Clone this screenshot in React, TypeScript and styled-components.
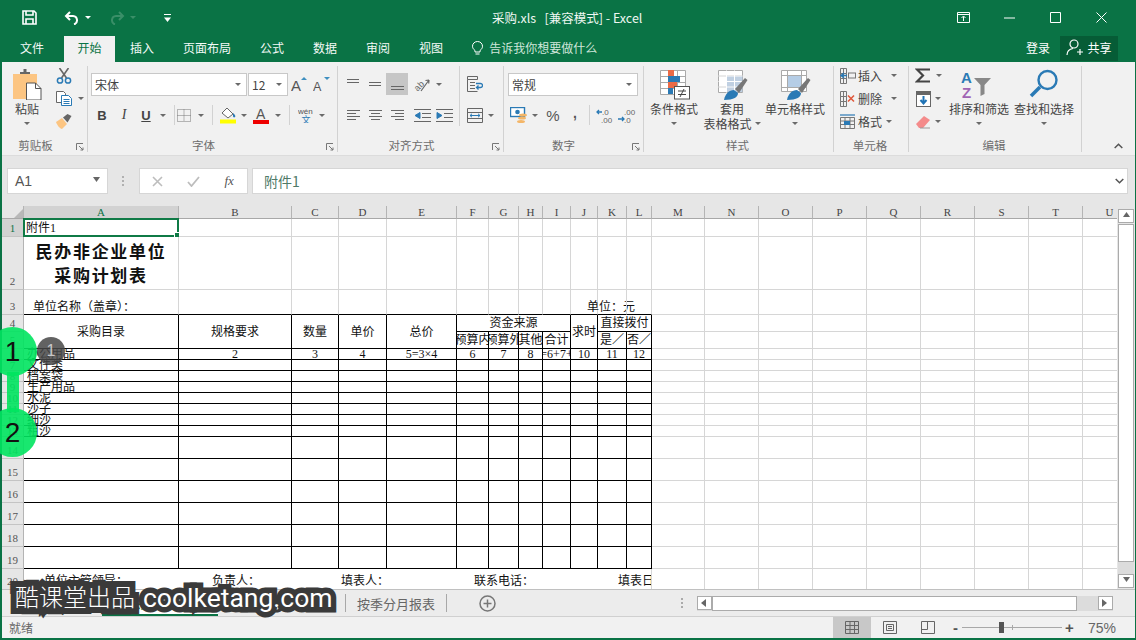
import React from "react";
import styled, { createGlobalStyle } from "styled-components";

const GREEN = "#0a7345";
const UI = `"Noto Sans CJK SC", "Noto Sans", sans-serif`;
const GRID = "#d6d6d6";

const Global = createGlobalStyle`
  html, body { margin: 0; padding: 0; background: ${GREEN}; }
  * { box-sizing: border-box; }
`;

const Window = styled.div`
  position: relative; width: 1136px; height: 640px; overflow: hidden;
  background: ${GREEN}; padding: 0 1px 2px 2px;
  display: flex; flex-direction: column;
  font-family: ${UI}; font-size: 12px; color: #444;
`;

/* ---------- title bar ---------- */
const TitleBar = styled.header`
  height: 35px; display: flex; align-items: center; color: #fff; flex: none;
`;
const Qat = styled.div`
  width: 490px; display: flex; align-items: center; padding-left: 20px;
`;
const Title = styled.div`
  flex: 1; font-size: 12.5px; white-space: pre; padding-bottom: 1px; color: #eef7f2;
`;
const WinControls = styled.div`
  display: flex; align-items: center; padding-right: 11px;
`;
const WinBtn = styled.div<{ $w: number }>`
  width: ${(p) => p.$w}px; display: flex; justify-content: center; align-items: center;
`;
const Slot = styled.div<{ $w: number; $l?: number; $on?: boolean }>`
  width: ${(p) => p.$w}px; flex: none; height: 22px; margin-left: ${(p) => p.$l ?? 0}px;
  display: flex; align-items: center; justify-content: center;
  background: ${(p) => (p.$on ? "#c6c6c6" : "transparent")};
`;
const Caret = styled.i<{ $c?: string }>`
  display: block; width: 0; height: 0; flex: none; font-style: normal;
  border-left: 3px solid transparent; border-right: 3px solid transparent;
  border-top: 3px solid ${(p) => p.$c ?? "#6a6a6a"};
`;

/* ---------- tab row ---------- */
const TabRow = styled.nav`
  height: 27px; display: flex; align-items: stretch; padding-left: 4px; flex: none; color: #fff;
`;
const Tab = styled.div<{ $on?: boolean; $mr?: number }>`
  display: flex; align-items: center; padding: 0 ${(p) => (p.$on ? "13.5px" : "14px")} 3px;
  margin-right: ${(p) => p.$mr ?? 1}px; margin-top: 1px; font-size: 12px;
  background: ${(p) => (p.$on ? "#f1f1f1" : "transparent")};
  color: ${(p) => (p.$on ? "#0a7345" : "#f4faf7")};
`;
const Tell = styled.div`
  display: flex; align-items: center; gap: 6px; margin-left: 14px; padding-bottom: 3px; margin-top: 1px; color: #cfe6da; flex: 1;
`;
const Login = styled.div`
  display: flex; align-items: center; margin-right: 10px; margin-top: 1px; padding-bottom: 3px;
`;
const Share = styled.div`
  width: 58px; height: 25px; margin: 1px 17px 0 0; background: #065c36; padding-bottom: 2px;
  display: flex; align-items: center; justify-content: center; gap: 3px;
`;

/* ---------- ribbon ---------- */
const Ribbon = styled.section`
  height: 94px; background: #f1f1f1; display: flex; flex: none; padding-top: 4px;
  border-bottom: 1px solid #dcdcdc;
`;
const Group = styled.div<{ $w: number }>`
  position: relative; width: ${(p) => p.$w}px; height: 86px; flex: none;
  border-right: 1px solid #d2d2d2; display: flex; flex-direction: column;
`;
const GroupBody = styled.div`
  height: 72px; display: flex;
`;
const GroupLabel = styled.div<{ $pr?: number }>`
  height: 14px; line-height: 14px; text-align: center; font-size: 11.5px; color: #6d6d6d;
  padding-right: ${(p) => p.$pr ?? 0}px;
`;
const Launcher = styled.svg`
  position: absolute; right: 3px; bottom: 1px;
`;
const Stack = styled.div<{ $pl?: number; $pt?: number; $w?: number; $mt?: number }>`
  display: flex; flex-direction: column; padding-left: ${(p) => p.$pl ?? 0}px;
  padding-top: ${(p) => p.$pt ?? 7}px; margin-top: ${(p) => p.$mt ?? 0}px;
  width: ${(p) => (p.$w ? `${p.$w}px` : "auto")}; flex: none;
`;
const Line = styled.div<{ $mt?: number }>`
  display: flex; align-items: center; height: 22px; margin-top: ${(p) => p.$mt ?? 0}px;
`;
const Combo = styled.div<{ $w: number; $mr?: number }>`
  width: ${(p) => p.$w}px; height: 23px; background: #fff; border: 1px solid #c8c8c8;
  margin-right: ${(p) => p.$mr ?? 0}px; flex: none;
  display: flex; align-items: center; justify-content: space-between;
  padding: 0 5px 0 3px; font-size: 12px; color: #444;
`;
const VSep = styled.div<{ $l?: number; $h?: number }>`
  width: 1px; height: ${(p) => p.$h ?? 20}px; background: #d2d2d2; flex: none;
  margin-left: ${(p) => p.$l ?? 0}px;
`;
const Large = styled.div<{ $w: number }>`
  width: ${(p) => p.$w}px; flex: none; display: flex; flex-direction: column; align-items: center;
  padding-top: 3px; font-size: 12px; line-height: 15px; color: #444; white-space: nowrap;
`;
const LargeIcon = styled.div`
  height: 32px; display: flex; align-items: flex-start; justify-content: center;
`;
const LargeCaret = styled.div`
  height: 15px; display: flex; align-items: center;
`;
const Inline = styled.span`
  display: inline-flex; align-items: center; gap: 3px;
`;
const CellRow = styled.div`
  display: flex; align-items: center; height: 23px; padding-left: 5px; white-space: nowrap; color: #444;
`;
const CellText = styled.span<{ $w: number }>`
  width: ${(p) => p.$w}px; margin-left: 2px; flex: none;
`;
const Bold = styled.b`
  font: bold 13px "Liberation Sans", sans-serif; color: #444;
`;
const Ital = styled.i`
  font: italic 14px "Liberation Serif", serif; color: #444;
`;
const Under = styled.u`
  font: bold 13px "Liberation Sans", sans-serif; color: #444;
`;
const Comma = styled.span`
  font: bold 14px "Liberation Sans", sans-serif; color: #555; margin-top: -4px;
`;
const Percent = styled.span`
  font: 15px "Liberation Sans", sans-serif; color: #555;
`;
const Collapse = styled.div`
  margin-left: 32px; align-self: flex-start; margin-top: 69px;
`;

/* ---------- formula bar ---------- */
const FormulaBar = styled.div`
  height: 50px; background: #e6e6e6; display: flex; padding: 12px 7px 0 5px; gap: 0; flex: none;
`;
const NameBox = styled.div`
  width: 101px; height: 26px; background: #fff; border: 1px solid #d6d6d6;
  display: flex; align-items: center; justify-content: space-between;
  padding: 0 7px; font: 14px "Liberation Sans", sans-serif; color: #555;
`;
const Grip = styled.div`
  width: 31px; display: flex; align-items: center; justify-content: center; height: 26px;
`;
const FxBox = styled.div`
  width: 109px; height: 26px; background: #fff; border: 1px solid #d6d6d6; margin-right: 4px;
  display: flex; align-items: center;
`;
const FxSlot = styled.div`
  width: 36px; display: flex; justify-content: center; align-items: center;
`;
const Fx = styled.span`
  font: italic 13px "Liberation Serif", serif; color: #555;
`;
const Input = styled.div`
  flex: 1; height: 26px; background: #fff; border: 1px solid #d6d6d6; padding: 0 3px 0 11px;
  display: flex; align-items: center; justify-content: space-between;
  font-size: 14px; color: #4f7a68;
`;

/* ---------- sheet ---------- */
const SheetArea = styled.div`
  height: 384px; display: flex; background: #fff; flex: none;
  border-bottom: 1px solid #c0c0c0;
`;
const SheetClip = styled.div`
  flex: 1; overflow: hidden;
`;
const Table = styled.table`
  table-layout: fixed; border-collapse: separate; border-spacing: 0; width: 1135px;
  font-family: "Liberation Serif", "Noto Sans CJK SC", serif; font-size: 12px; color: #111;
`;
const Corner = styled.th`
  height: 13px; padding: 0; background: #e6e6e6; border-right: 1px solid #b4b4b4; border-bottom: 1px solid #a8a8a8;
  text-align: right; vertical-align: bottom; line-height: 0;
`;
const ColHead = styled.th<{ $on?: boolean }>`
  height: 13px; padding: 0; font: 400 11px/12px "Liberation Serif", serif;
  background: ${(p) => (p.$on ? "#d2d2d2" : "#e6e6e6")};
  color: ${(p) => (p.$on ? "#0a7345" : "#444")};
  border-right: 1px solid #b4b4b4; border-bottom: 1px solid ${(p) => (p.$on ? "#0a7345" : "#a8a8a8")};
`;
const RowHead = styled.th<{ $on?: boolean; $h: number }>`
  height: ${(p) => p.$h}px; padding: 0; font: 400 11px/10px "Liberation Serif", serif;
  vertical-align: ${(p) => (p.$h > 20 ? "bottom" : "middle")};
  padding-bottom: ${(p) => (p.$h > 20 ? 3 : 0)}px;
  background: ${(p) => (p.$on ? "#d2d2d2" : "#e6e6e6")};
  color: ${(p) => (p.$on ? "#0a7345" : "#555")};
  border-right: 1px solid #b4b4b4; border-bottom: 1px solid #c4c4c4;
`;
const Td = styled.td<{
  $ink?: boolean; $under?: boolean; $h?: number; $bottom?: boolean; $pl?: number; $bare?: boolean; $c?: boolean;
}>`
  position: relative; padding: 0 0 0 ${(p) => p.$pl ?? 0}px;
  height: ${(p) => (p.$h ? `${p.$h}px` : "auto")};
  border-right: 1px solid ${(p) => (p.$ink ? "#000" : p.$bare ? "transparent" : GRID)};
  border-bottom: 1px solid ${(p) => (p.$ink || p.$under ? "#000" : GRID)};
  line-height: 10px; white-space: nowrap;
  vertical-align: ${(p) => (p.$bottom ? "bottom" : "middle")};
  text-align: ${(p) => (p.$c ? "center" : "left")};
`;
const Clip = styled.div<{ $tight?: boolean }>`
  display: flex; justify-content: center; overflow: hidden; white-space: nowrap;
  line-height: ${(p) => (p.$tight ? "10px" : "16px")};
  height: ${(p) => (p.$tight ? "10px" : "auto")};
`;
const Ink = styled.div<{ $mb?: number }>`
  line-height: 14px; margin-bottom: ${(p) => p.$mb ?? 0}px;
`;
const ClipLeft = styled.div`
  overflow: hidden; line-height: 14px; white-space: nowrap; margin-bottom: 1px;
`;
const HeadText = styled.div`
  text-align: center; line-height: 16px; font-size: 12px;
`;
const Heading = styled.div`
  font: bold 17px/24px "Noto Sans CJK SC", sans-serif; text-align: center; letter-spacing: 1.7px;
`;
const SelBox = styled.div`
  position: absolute; left: -1px; top: -1px; right: -1px; bottom: -1px; border: 2px solid #0f7a46;
`;
const SelHandle = styled.div`
  position: absolute; right: -3px; bottom: -3px; width: 6px; height: 6px; background: #0f7a46; border: 1px solid #fff;
`;
const A1Text = styled.div`
  line-height: 14px; padding-left: 2px; font-size: 12px;
`;

/* ---------- scroll bars ---------- */
const VScroll = styled.div`
  width: 18px; flex: none; background: #e6e6e6; display: flex; flex-direction: column; padding: 3px 1px 1px 1px;
`;
const ScrollBtn = styled.div<{ $wide?: boolean }>`
  width: ${(p) => (p.$wide ? "15px" : "16px")}; height: 14px; background: #fff; border: 1px solid #ababab;
  display: flex; align-items: center; justify-content: center; flex: none;
`;
const VThumb = styled.div`
  height: 338px; width: 16px; background: #fff; border: 1px solid #ababab; flex: none; margin-top: 1px;
`;
const VRest = styled.div`
  flex: 1; background: #dcdcdc; width: 16px;
`;

/* ---------- tab bar ---------- */
const SheetBar = styled.div`
  height: 27px; background: #ececec; display: flex; align-items: center; flex: none;
  border-bottom: 1px solid #d0d0d0;
`;
const SheetNavSpace = styled.div`
  width: 100px; flex: none;
`;
const SheetTab = styled.div<{ $w: number; $on?: boolean }>`
  position: relative; width: ${(p) => p.$w}px; height: 100%; flex: none; font-size: 13px; color: #666;
  display: flex; align-items: center; justify-content: center; white-space: nowrap;
  ${(p) => p.$on && "border-bottom: 2px solid #0a7345; background: #fff; color: #0a7345; font-weight: 700;"}
`;
const TabSep = styled.div`
  width: 1px; height: 18px; background: #a8a8a8; flex: none;
`;
const PlusSlot = styled.div`
  width: 81px; flex: none; display: flex; justify-content: center; align-items: center;
`;
const Dots = styled.div`
  width: 169px; flex: none; display: flex; justify-content: flex-end; padding-right: 13px;
`;
const HScroll = styled.div`
  width: 416px; height: 15px; flex: none; display: flex; background: #dcdcdc;
`;
const HThumb = styled.div`
  width: 365px; height: 15px; background: #fff; border: 1px solid #ababab; flex: none;
`;
const HRest = styled.div`
  flex: 1;
`;

/* ---------- status bar ---------- */
const Status = styled.footer`
  flex: 1; background: #f1f1f1; display: flex; align-items: stretch; font-size: 12px; color: #666;
`;
const Ready = styled.div`
  flex: none; width: 831px; padding-left: 7px; display: flex; align-items: center;
`;
const ViewBtn = styled.div<{ $on?: boolean }>`
  width: 38px; flex: none; display: flex; align-items: center; justify-content: center;
  background: ${(p) => (p.$on ? "#c8c8c8" : "transparent")};
`;
const Zoomer = styled.div`
  display: flex; align-items: center; margin-left: 4px; flex: none;
`;
const Track = styled.div`
  position: relative; width: 100px; height: 1px; background: #a8a8a8; margin: 0 3px 0 2px;
`;
const Knob = styled.div`
  position: absolute; left: 37px; top: -5px; width: 5px; height: 11px; background: #555;
`;
const Tick = styled.div`
  position: absolute; left: 50px; top: -2px; width: 1px; height: 5px; background: #a8a8a8;
`;
const Sign = styled.span`
  font: bold 15px "Liberation Sans", sans-serif; color: #555; width: 9px; text-align: center;
`;
const Percentage = styled.div`
  margin-left: 14px; display: flex; align-items: center; font: 14px "Liberation Sans", sans-serif; color: #666;
`;

/* ---------- overlays ---------- */
const Marker = styled.div<{ $x: number; $y: number }>`
  position: absolute; left: ${(p) => p.$x}px; top: ${(p) => p.$y}px; width: 49px; height: 49px; border-radius: 50%;
  background: rgba(0, 228, 95, 0.9); color: #111;
  font: 28px/49px "Liberation Sans", sans-serif; text-align: center;
`;
const MarkerLink = styled.div`
  position: absolute; left: 7px; top: 372px; width: 12px; height: 40px; background: rgba(0, 228, 95, 0.9);
`;
const Badge = styled.div`
  position: absolute; left: 37px; top: 337px; width: 28px; height: 28px; border-radius: 50%;
  background: rgba(70, 70, 70, 0.85); color: #c8c8c8; font: 16px/28px "Liberation Sans", sans-serif; text-align: center;
`;
const Watermark = styled.div`
  position: absolute; left: 15px; top: 581px; display: flex; align-items: center; white-space: nowrap; color: #fff;
`;
const WmCn = styled.span`
  font: 300 24px/32px "Noto Sans CJK SC", sans-serif; -webkit-text-stroke: 12px #3a3a3a; paint-order: stroke fill;
  margin-top: -3px;
`;
const WmEn = styled.span`
  font: 400 26.5px/32px "Roboto", "Liberation Sans", sans-serif; margin-left: 8px; margin-top: 1px;
  -webkit-text-stroke: 11px #3a3a3a; paint-order: stroke fill;
`;

/* ---------- icons ---------- */
const Save = () => (
  <svg width="15" height="15" viewBox="0 0 15 15" fill="none" stroke="#fff" strokeWidth="1.6">
    <path d="M1 1h11l2 2v11H1z" /><path d="M4 1v4h7V1M4 14V9h7v5" />
  </svg>
);
const Undo = ({ c, flip }: { c: string; flip?: boolean }) => (
  <svg width="16" height="14" viewBox="0 0 16 14" fill="none" stroke={c} strokeWidth="2" transform={flip ? "scale(-1 1)" : undefined}>
    <path d="M6 1L2 5l4 4" /><path d="M2 5h7a4.3 4.3 0 0 1 1 8.4" />
  </svg>
);
const Custom = () => (
  <svg width="7" height="8" viewBox="0 0 7 8" fill="#fff"><rect width="7" height="1" /><path d="M0 3.500h7L3.500 8z" /></svg>
);
const Launch = () => (
  <Launcher width="8" height="8" viewBox="0 0 8 8" fill="none" stroke="#777">
    <path d="M.5 7V.5H7" /><path d="M3 3l4 4M7 4.500V7H4.500" />
  </Launcher>
);
const PasteIco = () => (
  <svg width="29" height="31" viewBox="0 0 29 31">
    <rect x="0" y="5" width="24" height="25" fill="#fcc582" />
    <path d="M7 5V3h3.500V0h3v3H17v2z" fill="#666" />
    <path d="M13.500 14h9l5.500 5.500V31H13.500z" fill="#fff" stroke="#555" />
    <path d="M22.500 14v5.500H28" fill="none" stroke="#555" />
  </svg>
);
const Scissors = () => (
  <svg width="16" height="16" viewBox="0 0 16 16" fill="none">
    <path d="M3.500 0l7 10M12.500 0l-7 10" stroke="#666" strokeWidth="1.6" />
    <circle cx="4" cy="12.500" r="2.600" stroke="#2a7ab5" strokeWidth="1.5" />
    <circle cx="12" cy="12.500" r="2.600" stroke="#2a7ab5" strokeWidth="1.5" />
  </svg>
);
const CopyIco = () => (
  <svg width="16" height="15" viewBox="0 0 16 15" fill="#fff">
    <path d="M.5.5h7l2 2v9h-9z" stroke="#666" />
    <path d="M5.500 4.500h7l3 3v7h-10z" stroke="#2a7ab5" />
    <path d="M7.500 8.500h6M7.500 10.500h6M7.500 12.500h6" stroke="#2a7ab5" />
  </svg>
);
const Brush = () => (
  <svg width="16" height="15" viewBox="0 0 16 15">
    <path d="M0 8l6-4 5 6-5 5C4 15 1 11 0 8z" fill="#fcc582" />
    <path d="M7 3.500L11.500 0l4 2-4 6.500z" fill="#666" />
  </svg>
);
const Grow = ({ size, up }: { size: number; up: boolean }) => (
  <svg width="18" height="16" viewBox="0 0 18 16">
    <text x="0" y="15" fontFamily="Liberation Sans" fontSize={size} fill="#555">A</text>
    <path d={up ? "M10 4l3-3 3 3z" : "M11 1h6l-3 3z"} fill="#3f8fc0" />
  </svg>
);
const BorderIco = () => (
  <svg width="14" height="13" viewBox="0 0 14 13" stroke="#777" strokeDasharray="1 1" fill="none">
    <path d="M.5.5h13v12H.5zM7 .5v12M.5 6.500h13" />
  </svg>
);
const FillIco = () => (
  <svg width="17" height="17" viewBox="0 0 17 17">
    <path d="M2 6l5-5 6 6-5 4z" fill="#fff" stroke="#666" />
    <path d="M13 6c2 2 3 3 2 4s-2 0-2-1z" fill="#2a7ab5" />
    <rect y="12.500" width="16" height="4" fill="#ffff00" />
  </svg>
);
const ColorA = () => (
  <svg width="17" height="17" viewBox="0 0 17 17">
    <text x="3" y="12" fontFamily="Liberation Sans" fontSize="14" fill="#555">A</text>
    <rect y="13" width="16" height="4" fill="#ee0000" />
  </svg>
);
const Wen = () => (
  <svg width="16" height="16" viewBox="0 0 16 16">
    <text x="0" y="6.500" fontFamily="Liberation Sans" fontSize="8" fill="#555">wén</text>
    <text x="3.500" y="15.500" fontFamily="Noto Sans CJK SC" fontSize="9" fill="#2a7ab5">文</text>
  </svg>
);
const Lines = ({ d, c = "#666" }: { d: string; c?: string }) => (
  <svg width="15" height="15" viewBox="0 0 15 15" fill="none" stroke={c}><path d={d} /></svg>
);
const Orient = () => (
  <svg width="17" height="16" viewBox="0 0 17 16" fill="none">
    <text x="0" y="13" fontFamily="Liberation Sans" fontSize="9" fill="#666" stroke="none" transform="rotate(-45 5 10)">ab</text>
    <path d="M7 15L15 4M15 4l-3.500 .5M15 4l-.3 3.500" stroke="#666" strokeWidth="1.2" />
  </svg>
);
const Indent = ({ flip }: { flip?: boolean }) => (
  <svg width="17" height="13" viewBox="0 0 17 13" fill="none" stroke="#666">
    <path d="M0 .5h17M8 4.500h9M8 8.500h9M0 12.500h17" />
    <path d={flip ? "M6 3.500v6L1 6.500z" : "M1 3.500v6L6 6.500z"} fill="#2a7ab5" stroke="#2a7ab5" />
  </svg>
);
const Wrap = () => (
  <svg width="16" height="16" viewBox="0 0 16 16" fill="none">
    <path d="M.5.5h10v3h-10zM.5 3.500v12h10M3 6.500h5M3 9.500h5M3 12.500h5" stroke="#666" />
    <path d="M9 7.500h4.500a1.800 1.800 0 0 1 0 4H10M11.500 9.500l-2 2 2 2" stroke="#2a7ab5" strokeWidth="1.3" />
  </svg>
);
const Merge = () => (
  <svg width="16" height="15" viewBox="0 0 16 15" fill="none">
    <path d="M.5.5h15v14H.5zM.5 4.500h15M.5 10.500h15" stroke="#666" />
    <path d="M3 7.500h10M5 5.800L3 7.500l2 1.700M11 5.800l2 1.700-2 1.700" stroke="#2a7ab5" />
  </svg>
);
const Currency = () => (
  <svg width="18" height="17" viewBox="0 0 18 17">
    <rect x=".5" y=".5" width="14" height="9" fill="#fff" stroke="#2a7ab5" strokeWidth="1.4" />
    <circle cx="7.500" cy="5" r="2.300" fill="#2a7ab5" />
    <ellipse cx="13" cy="8" rx="4" ry="1.600" fill="#f4b668" />
    <ellipse cx="12" cy="11" rx="4" ry="1.600" fill="#f4b668" />
    <ellipse cx="11" cy="14.500" rx="4" ry="1.600" fill="#f4b668" />
  </svg>
);
const Decimal = ({ a, b, left }: { a: string; b: string; left: boolean }) => (
  <svg width="18" height="15" viewBox="0 0 18 15">
    <text x="6" y="7" fontFamily="Liberation Sans" fontSize="8" fill="#666">{a}</text>
    <text x={left ? 5 : 6} y="14.500" fontFamily="Liberation Sans" fontSize="8" fill="#666">{b}</text>
    <path d={left ? "M6 4H1M3 2L1 4l2 2" : "M0 11h6M4 9l2 2-2 2"} stroke="#2a7ab5" strokeWidth="1.3" fill="none" />
  </svg>
);
const Cond = () => (
  <svg width="31" height="31" viewBox="0 0 31 31">
    <path d="M1.500 1.500h25v24h-25zM1.500 7.500h25M1.500 13.500h25M1.500 19.500h25M9.500 1.500v24M18.500 1.500v24" fill="#fff" stroke="#aaa" />
    <rect x="9" y="1" width="6" height="6" fill="#ea6b47" /><rect x="9" y="7" width="12" height="6" fill="#2a7ab5" />
    <rect x="9" y="13" width="9" height="6" fill="#ea6b47" /><rect x="9" y="19" width="5" height="6" fill="#2a7ab5" />
    <rect x="15.500" y="17.500" width="15" height="12.500" fill="#fff" stroke="#555" />
    <path d="M19 22h8M19 25.500h8M25 20l-4 8" stroke="#444" fill="none" />
  </svg>
);
const TableFmt = () => (
  <svg width="31" height="31" viewBox="0 0 31 31">
    <path d="M1.500 1.500h24v22h-24zM1.500 7h24M1.500 12.500h24M1.500 18h24M9.500 1.500v22M17.500 1.500v22" fill="#fff" stroke="#aaa" />
    <rect x="9.500" y="7" width="16" height="16" fill="#b5c8dd" opacity=".85" />
    <path d="M1.500 7h24M1.500 12.500h24M1.500 18h24M9.500 1.500v22M17.500 1.500v22" stroke="#fff" fill="none" />
    <path d="M18 20L28 9l2.500 2L22 24z" fill="#777" />
    <path d="M7 31c1-6 5-10 10-10l4 3c0 4-4 7-14 7z" fill="#2a7ab5" />
  </svg>
);
const CellFmt = () => (
  <svg width="31" height="31" viewBox="0 0 31 31">
    <path d="M1.500 1.500h25v21h-25zM1.500 6.500h25M7.500 1.500v21M21.500 1.500v21M1.500 18.500h25" fill="#fff" stroke="#aaa" />
    <rect x="8" y="7" width="13" height="11" fill="#b5cde6" />
    <path d="M18 20L28 9l2.500 2L22 24z" fill="#777" />
    <path d="M7 31c1-6 5-10 10-10l4 3c0 4-4 7-14 7z" fill="#2a7ab5" />
  </svg>
);
const CellOp = ({ kind }: { kind: "ins" | "del" | "fmt" }) => (
  <svg width="17" height="16" viewBox="0 0 17 16" fill="none">
    {kind === "fmt" ? (
      <>
        <path d="M1.500 3.500h14v11h-14zM1.500 7h14M1.500 10.500h14M6 3.500v11M11 3.500v11" stroke="#777" />
        <rect x="5" y="7" width="6" height="4" fill="#2a7ab5" />
        <path d="M1 1h15" stroke="#2a7ab5" strokeWidth="1.2" />
      </>
    ) : (
      <>
        <path d="M1.500 .5h6v5h-6zM1.500 5.500h6v5h-6zM1.500 10.500h6v5h-6zM4.500 .5v15" stroke="#777" />
        {kind === "ins" ? (
          <>
            <rect x="9.500" y="5" width="7" height="5" stroke="#777" />
            <path d="M8 7.500H2M5 5L2 7.500 5 10" stroke="#2a7ab5" strokeWidth="1.4" />
          </>
        ) : (
          <path d="M9 4.500l6 6M15 4.500l-6 6" stroke="#e0593c" strokeWidth="1.6" />
        )}
      </>
    )}
  </svg>
);
const Sigma = () => (
  <svg width="16" height="15" viewBox="0 0 16 15" fill="none" stroke="#444" strokeWidth="2.200">
    <path d="M15 1.500H2l6 6-6 6h13" />
  </svg>
);
const FillDown = () => (
  <svg width="15" height="16" viewBox="0 0 15 16">
    <rect x=".5" y=".5" width="14" height="15" fill="#fff" stroke="#666" />
    <rect x="0" y="0" width="15" height="4" fill="#666" />
    <path d="M7.500 5v7M4.500 9l3 3.500 3-3.500" stroke="#1f73b5" strokeWidth="2" fill="none" />
  </svg>
);
const Eraser = () => (
  <svg width="15" height="14" viewBox="0 0 15 14">
    <path d="M0 9l8-8 6 4-7 8H3z" fill="#f48b8b" />
    <path d="M4 13h10" stroke="#999" />
  </svg>
);
const SortIco = () => (
  <svg width="36" height="31" viewBox="0 0 36 31">
    <text x="0" y="14" fontFamily="Liberation Sans" fontWeight="700" fontSize="15" fill="#2a7ab5">A</text>
    <text x="1" y="29" fontFamily="Liberation Sans" fontWeight="700" fontSize="15" fill="#a064b4">Z</text>
    <path d="M13 9h17l-6.500 7v9l-4 2V16z" fill="#888" />
  </svg>
);
const FindIco = () => (
  <svg width="30" height="29" viewBox="0 0 30 29" fill="none" stroke="#2a7ab5">
    <circle cx="18.500" cy="11" r="9" strokeWidth="2.400" />
    <path d="M11 18L2 27" strokeWidth="3.600" />
  </svg>
);
const Chevron = ({ down }: { down?: boolean }) => (
  <svg width="9" height="6" viewBox="0 0 9 6" fill="none" stroke="#555" strokeWidth="1.5">
    <path d={down ? "M.7 1l3.800 3.800L8.300 1" : "M.7 5l3.800-3.800L8.300 5"} />
  </svg>
);
const Vgrip = ({ c = "#aaa" }: { c?: string }) => (
  <svg width="3" height="11" viewBox="0 0 3 11" fill={c}>
    <rect width="2" height="2" /><rect y="4" width="2" height="2" /><rect y="8" width="2" height="2" />
  </svg>
);
const Tri = ({ dir }: { dir: "u" | "d" | "l" | "r" }) => {
  const d = { u: "M0 5l3.500-5L7 5z", d: "M0 0h7L3.500 5z", l: "M5 0v8L0 4z", r: "M0 0v8l5-4z" }[dir];
  return <svg width="7" height="8" viewBox="0 0 7 8" fill="#666"><path d={d} /></svg>;
};

const ALIGN = {
  top: "M1 2.500h12M1 5.500h12",
  mid: "M1 5.500h12M1 8.500h12",
  bot: "M1 9.500h13M1 12.500h13",
  left: "M1 2.500h13M1 5.500h9M1 8.500h13M1 11.500h9",
  center: "M1 2.500h13M3 5.500h9M1 8.500h13M3 11.500h9",
  right: "M1 2.500h13M5 5.500h9M1 8.500h13M5 11.500h9",
};

/* ---------- sheet data ---------- */
const COLS = [155, 113, 47, 48, 70, 32, 30, 24, 28, 27, 29, 25, 53, 54, 54, 54, 54, 54, 54, 54, 54];
const LETTERS = "ABCDEFGHIJKLMNOPQRSTU".split("");
const FAR = LETTERS.slice(12);
const Far = () => <>{FAR.map((l) => <Td key={l} />)}</>;
const Blanks = ({ from, to, ink, under }: { from: number; to: number; ink?: boolean; under?: boolean }) => (
  <>
    {LETTERS.slice(from, to).map((l) => <Td key={l} $ink={ink} $under={under} />)}
  </>
);

const ITEMS: [number, string][] = [
  [7, "文件类"], [8, "档案袋"], [9, "生产用品"], [10, "水泥"], [11, "沙子"], [12, "细沙"], [13, "粗沙"],
];
const SERIAL = ["2", "3", "4", "5=3×4", "6", "7", "8", "=6+7+", "10", "11", "12"];

const Rh = ({ n, h, on }: { n: number; h: number; on?: boolean }) => <RowHead $h={h} $on={on}>{n}</RowHead>;

const Sheet = () => (
  <Table>
    <colgroup>
      <col width={22} />
      {COLS.map((w, i) => <col key={i} width={w} />)}
    </colgroup>
    <tbody>
      <tr>
        <Corner>
          <svg width="9" height="9" viewBox="0 0 9 9" fill="#b8b8b8"><path d="M9 0v9H0z" /></svg>
        </Corner>
        {LETTERS.map((l, i) => <ColHead key={l} $on={i === 0}>{l}</ColHead>)}
      </tr>
      <tr>
        <Rh n={1} h={18} on />
        <Td $h={18}>
          <A1Text>附件1</A1Text>
          <SelBox><SelHandle /></SelBox>
        </Td>
        <Blanks from={1} to={12} /><Far />
      </tr>
      <tr>
        <Rh n={2} h={53} />
        <Td $h={53}><Heading>民办非企业单位<br />采购计划表</Heading></Td>
        <Blanks from={1} to={12} /><Far />
      </tr>
      <tr>
        <Rh n={3} h={25} />
        <Td $h={25} $under $bottom $pl={9}><Ink>单位名称（盖章）：</Ink></Td>
        <Blanks from={1} to={9} under />
        <Td $under $bottom $pl={16}><Ink>单位：元</Ink></Td>
        <Blanks from={10} to={12} under /><Far />
      </tr>
      <tr>
        <Rh n={4} h={17} />
        <Td $ink rowSpan={2} $c><Clip>采购目录</Clip></Td>
        <Td $ink rowSpan={2} $c><Clip>规格要求</Clip></Td>
        <Td $ink rowSpan={2} $c><Clip>数量</Clip></Td>
        <Td $ink rowSpan={2} $c><Clip>单价</Clip></Td>
        <Td $ink rowSpan={2} $c><Clip>总价</Clip></Td>
        <Td $ink colSpan={4} $h={17}><HeadText>资金来源</HeadText></Td>
        <Td $ink rowSpan={2}><Clip>求时</Clip></Td>
        <Td $ink colSpan={2}><HeadText>直接拨付</HeadText></Td>
        <Far />
      </tr>
      <tr>
        <Rh n={5} h={17} />
        <Td $ink $h={17}><Clip>预算内</Clip></Td>
        <Td $ink><Clip>预算外</Clip></Td>
        <Td $ink><Clip>其他</Clip></Td>
        <Td $ink><Clip>合计</Clip></Td>
        <Td $ink><Clip>是／</Clip></Td>
        <Td $ink><Clip>否／</Clip></Td>
        <Far />
      </tr>
      <tr>
        <Rh n={6} h={11} />
        <Td $ink $h={11} $pl={3}>办公用品</Td>
        {SERIAL.map((s) => <Td key={s} $ink><Clip $tight>{s}</Clip></Td>)}
        <Far />
      </tr>
      {ITEMS.map(([n, t]) => (
        <tr key={n}>
          <Rh n={n} h={11} />
          <Td $ink $h={11} $pl={3}>{t}</Td>
          <Blanks from={1} to={12} ink /><Far />
        </tr>
      ))}
      {[14, 15, 16, 17, 18, 19].map((n) => (
        <tr key={n}>
          <Rh n={n} h={22} />
          <Td $ink $h={22} />
          <Blanks from={1} to={12} ink /><Far />
        </tr>
      ))}
      <tr>
        <Rh n={20} h={21} />
        <Td $h={21} $bottom $pl={20} $bare><Ink $mb={1}>单位主管领导：</Ink></Td>
        <Td $bottom $pl={33} $bare><Ink $mb={1}>负责人：</Ink></Td>
        <Td $bare />
        <Td $bottom $pl={2} $bare><Ink $mb={1}>填表人：</Ink></Td>
        <Td $bare />
        <Td $bottom $pl={17} $bare><Ink $mb={1}>联系电话：</Ink></Td>
        <Td $bare /><Td $bare /><Td $bare /><Td $bare />
        <Td colSpan={2} $bottom $pl={20}><ClipLeft>填表日期：</ClipLeft></Td>
        <Far />
      </tr>
    </tbody>
  </Table>
);

export default function App() {
  return (
    <>
      <Global />
      <Window>
        <TitleBar>
          <Qat>
            <Save />
            <Slot $w={16} $l={27}><Undo c="#fff" /></Slot>
            <Slot $w={10} $l={3}><Caret $c="#fff" /></Slot>
            <Slot $w={16} $l={16}><Undo c="#3a8f68" flip /></Slot>
            <Slot $w={10} $l={3}><Caret $c="#3a8f68" /></Slot>
            <Slot $w={8} $l={25}><Custom /></Slot>
          </Qat>
          <Title>采购.xls   [兼容模式] - Excel</Title>
          <WinControls>
            <WinBtn $w={46}>
              <svg width="13" height="11" viewBox="0 0 13 11" fill="none" stroke="#fff">
                <path d="M.5.5h12v10H.5zM.5 2.500h12M6.500 9V4.500M4.500 6l2-2 2 2" />
              </svg>
            </WinBtn>
            <WinBtn $w={46}>
              <svg width="11" height="2" viewBox="0 0 11 2" stroke="#fff"><path d="M0 1h11" /></svg>
            </WinBtn>
            <WinBtn $w={46}>
              <svg width="11" height="11" viewBox="0 0 11 11" fill="none" stroke="#fff"><path d="M.5.5h10v10H.5z" /></svg>
            </WinBtn>
            <WinBtn $w={46}>
              <svg width="11" height="11" viewBox="0 0 11 11" fill="none" stroke="#fff"><path d="M.5.5l10 10M10.500.5l-10 10" /></svg>
            </WinBtn>
          </WinControls>
        </TitleBar>

        <TabRow>
          <Tab $mr={6}>文件</Tab>
          <Tab $on>开始</Tab>
          <Tab>插入</Tab>
          <Tab>页面布局</Tab>
          <Tab>公式</Tab>
          <Tab>数据</Tab>
          <Tab>审阅</Tab>
          <Tab>视图</Tab>
          <Tell>
            <svg width="11" height="14" viewBox="0 0 11 14" fill="none" stroke="#fff">
              <path d="M3 9.500C1 8 .5 6.500 .5 5.200a5 4.700 0 0 1 10 0c0 1.300-.5 2.800-2.500 4.300v1.500h-5zM3.500 13h4" />
            </svg>
            告诉我你想要做什么
          </Tell>
          <Login>登录</Login>
          <Share>
            <svg width="18" height="17" viewBox="0 0 18 17" fill="none" stroke="#fff" strokeWidth="1.2">
              <circle cx="8" cy="5" r="4" /><path d="M1 16c0-4 3-6 6-6.500M11 13h6M14 10v6" />
            </svg>
            共享
          </Share>
        </TabRow>

        <Ribbon>
          <Group $w={86}>
            <GroupBody>
              <Stack $w={50} $pt={0}>
                <Large $w={50}>
                  <LargeIcon><PasteIco /></LargeIcon>
                  <span>粘贴</span>
                  <LargeCaret><Caret /></LargeCaret>
                </Large>
              </Stack>
              <Stack $pt={0} $mt={-2}>
                <CellRow><Slot $w={16} $l={-1}><Scissors /></Slot></CellRow>
                <CellRow><Slot $w={16} $l={-1}><CopyIco /></Slot><Slot $w={18}><Caret /></Slot></CellRow>
                <CellRow><Slot $w={16} $l={-1}><Brush /></Slot></CellRow>
              </Stack>
            </GroupBody>
            <GroupLabel $pr={18}>剪贴板</GroupLabel>
            <Launch />
          </Group>

          <Group $w={250}>
            <GroupBody>
              <Stack $pl={3}>
                <Line>
                  <Combo $w={156} $mr={1}>宋体<Caret /></Combo>
                  <Combo $w={40}>12<Caret /></Combo>
                  <Slot $w={22} $l={1}><Grow size={15} up /></Slot>
                  <Slot $w={22}><Grow size={12.5} up={false} /></Slot>
                </Line>
                <Line $mt={9}>
                  <Slot $w={22}><Bold>B</Bold></Slot>
                  <Slot $w={22}><Ital>I</Ital></Slot>
                  <Slot $w={22}><Under>U</Under></Slot>
                  <Slot $w={12}><Caret /></Slot>
                  <VSep $l={5} />
                  <Slot $w={18}><BorderIco /></Slot>
                  <Slot $w={16}><Caret /></Slot>
                  <VSep $l={3} />
                  <Slot $w={3} />
                  <Slot $w={24}><FillIco /></Slot>
                  <Slot $w={8}><Caret /></Slot>
                  <Slot $w={26}><ColorA /></Slot>
                  <Slot $w={8}><Caret /></Slot>
                  <VSep $l={7} />
                  <Slot $w={3} />
                  <Slot $w={26}><Wen /></Slot>
                  <Slot $w={6}><Caret /></Slot>
                </Line>
              </Stack>
            </GroupBody>
            <GroupLabel $pr={18}>字体</GroupLabel>
            <Launch />
          </Group>

          <Group $w={166}>
            <GroupBody>
              <Stack $pl={4}>
                <Line>
                  <Slot $w={22}><Lines d={ALIGN.top} /></Slot>
                  <Slot $w={22}><Lines d={ALIGN.mid} /></Slot>
                  <Slot $w={22} $on><Lines d={ALIGN.bot} /></Slot>
                  <Slot $w={26} $l={1}><Orient /></Slot>
                  <Slot $w={8}><Caret /></Slot>
                </Line>
                <Line $mt={9}>
                  <Slot $w={22}><Lines d={ALIGN.left} /></Slot>
                  <Slot $w={22}><Lines d={ALIGN.center} /></Slot>
                  <Slot $w={22}><Lines d={ALIGN.right} /></Slot>
                  <Slot $w={22} $l={3}><Indent flip /></Slot>
                  <Slot $w={22}><Indent /></Slot>
                </Line>
              </Stack>
              <VSep $l={4} $h={60} />
              <Stack>
                <Line><Slot $w={30}><Wrap /></Slot></Line>
                <Line $mt={9}><Slot $w={30}><Merge /></Slot><Slot $w={2}><Caret /></Slot></Line>
              </Stack>
            </GroupBody>
            <GroupLabel $pr={18}>对齐方式</GroupLabel>
            <Launch />
          </Group>

          <Group $w={140}>
            <GroupBody>
              <Stack $pl={4}>
                <Line><Combo $w={130}>常规<Caret /></Combo></Line>
                <Line $mt={9}>
                  <Slot $w={22}><Currency /></Slot>
                  <Slot $w={10}><Caret /></Slot>
                  <Slot $w={22} $l={2}><Percent>%</Percent></Slot>
                  <Slot $w={22}><Comma>,</Comma></Slot>
                  <VSep $l={3} />
                  <Slot $w={22} $l={4}><Decimal a=".0" b=".00" left /></Slot>
                  <Slot $w={22}><Decimal a=".00" b=".0" left={false} /></Slot>
                </Line>
              </Stack>
            </GroupBody>
            <GroupLabel $pr={20}>数字</GroupLabel>
            <Launch />
          </Group>

          <Group $w={190}>
            <GroupBody>
              <Large $w={60}>
                <LargeIcon><Cond /></LargeIcon>
                <span>条件格式</span>
                <LargeCaret><Caret /></LargeCaret>
              </Large>
              <Large $w={56}>
                <LargeIcon><TableFmt /></LargeIcon>
                <span>套用</span>
                <Inline>表格格式<Caret /></Inline>
              </Large>
              <Large $w={70}>
                <LargeIcon><CellFmt /></LargeIcon>
                <span>单元格样式</span>
                <LargeCaret><Caret /></LargeCaret>
              </Large>
            </GroupBody>
            <GroupLabel $pr={2}>样式</GroupLabel>
          </Group>

          <Group $w={75}>
            <GroupBody>
              <Stack $pt={0} $mt={-2}>
                <CellRow><CellOp kind="ins" /><CellText $w={24}>插入</CellText><Slot $w={24}><Caret /></Slot></CellRow>
                <CellRow><CellOp kind="del" /><CellText $w={24}>删除</CellText><Slot $w={24}><Caret /></Slot></CellRow>
                <CellRow><CellOp kind="fmt" /><CellText $w={24}>格式</CellText><Slot $w={14}><Caret /></Slot></CellRow>
              </Stack>
            </GroupBody>
            <GroupLabel $pr={2}>单元格</GroupLabel>
          </Group>

          <Group $w={173}>
            <GroupBody>
              <Stack $pt={0} $w={39} $mt={-2}>
                <CellRow><Slot $w={18}><Sigma /></Slot><Slot $w={14}><Caret /></Slot></CellRow>
                <CellRow><Slot $w={18}><FillDown /></Slot><Slot $w={12}><Caret /></Slot></CellRow>
                <CellRow><Slot $w={18}><Eraser /></Slot><Slot $w={12}><Caret /></Slot></CellRow>
              </Stack>
              <Large $w={62}>
                <LargeIcon><SortIco /></LargeIcon>
                <span>排序和筛选</span>
                <LargeCaret><Caret /></LargeCaret>
              </Large>
              <Large $w={68}>
                <LargeIcon><FindIco /></LargeIcon>
                <span>查找和选择</span>
                <LargeCaret><Caret /></LargeCaret>
              </Large>
            </GroupBody>
            <GroupLabel $pr={2}>编辑</GroupLabel>
          </Group>
          <Collapse><Chevron /></Collapse>
        </Ribbon>

        <FormulaBar>
          <NameBox>A1<Tri dir="d" /></NameBox>
          <Grip><Vgrip c="#b0b0b0" /></Grip>
          <FxBox>
            <FxSlot>
              <svg width="11" height="11" viewBox="0 0 11 11" stroke="#bdbdbd" strokeWidth="1.6"><path d="M1 1l9 9M10 1l-9 9" /></svg>
            </FxSlot>
            <FxSlot>
              <svg width="13" height="11" viewBox="0 0 13 11" fill="none" stroke="#bdbdbd" strokeWidth="1.8"><path d="M1 6l3.500 4L12 1" /></svg>
            </FxSlot>
            <FxSlot><Fx>fx</Fx></FxSlot>
          </FxBox>
          <Input>附件1<Chevron down /></Input>
        </FormulaBar>

        <SheetArea>
          <SheetClip><Sheet /></SheetClip>
          <VScroll>
            <ScrollBtn><Tri dir="u" /></ScrollBtn>
            <VThumb />
            <VRest />
            <ScrollBtn><Tri dir="d" /></ScrollBtn>
          </VScroll>
        </SheetArea>

        <SheetBar>
          <SheetNavSpace />
          <SheetTab $w={116} $on>采购计划表</SheetTab>
          <SheetTab $w={127}>计划分月执行报表</SheetTab>
          <TabSep />
          <SheetTab $w={100}>按季分月报表</SheetTab>
          <TabSep />
          <PlusSlot>
            <svg width="17" height="17" viewBox="0 0 17 17" fill="none" stroke="#777" strokeWidth="1.5">
              <circle cx="8.500" cy="8.500" r="7.500" /><path d="M4.500 8.500h8M8.500 4.500v8" />
            </svg>
          </PlusSlot>
          <Dots><Vgrip /></Dots>
          <HScroll>
            <ScrollBtn $wide><Tri dir="l" /></ScrollBtn>
            <HThumb />
            <HRest />
            <ScrollBtn $wide><Tri dir="r" /></ScrollBtn>
          </HScroll>
        </SheetBar>

        <Status>
          <Ready>就绪</Ready>
          <ViewBtn $on>
            <svg width="14" height="13" viewBox="0 0 14 13" fill="none" stroke="#666">
              <path d="M.5.5h13v12H.5zM.5 4.500h13M.5 8.500h13M5 .5v12M9.500 .5v12" />
            </svg>
          </ViewBtn>
          <ViewBtn>
            <svg width="14" height="13" viewBox="0 0 14 13" fill="none" stroke="#666">
              <path d="M.5.5h13v12H.5zM3.500 3.500h7v6h-7zM5 5.500h4M5 7.500h4" />
            </svg>
          </ViewBtn>
          <ViewBtn>
            <svg width="14" height="13" viewBox="0 0 14 13" fill="none" stroke="#666">
              <path d="M.5.5h13v12H.5zM.5 8.500h6V.5" />
            </svg>
          </ViewBtn>
          <Zoomer>
            <Sign>-</Sign>
            <Track><Tick /><Knob /></Track>
            <Sign>+</Sign>
          </Zoomer>
          <Percentage>75%</Percentage>
        </Status>

        <MarkerLink />
        <Marker $x={-12} $y={327}>1</Marker>
        <Marker $x={-12} $y={408}>2</Marker>
        <Badge>1</Badge>
        <Watermark>
          <WmCn>酷课堂出品</WmCn>
          <WmEn>coolketang.com</WmEn>
        </Watermark>
      </Window>
    </>
  );
}
